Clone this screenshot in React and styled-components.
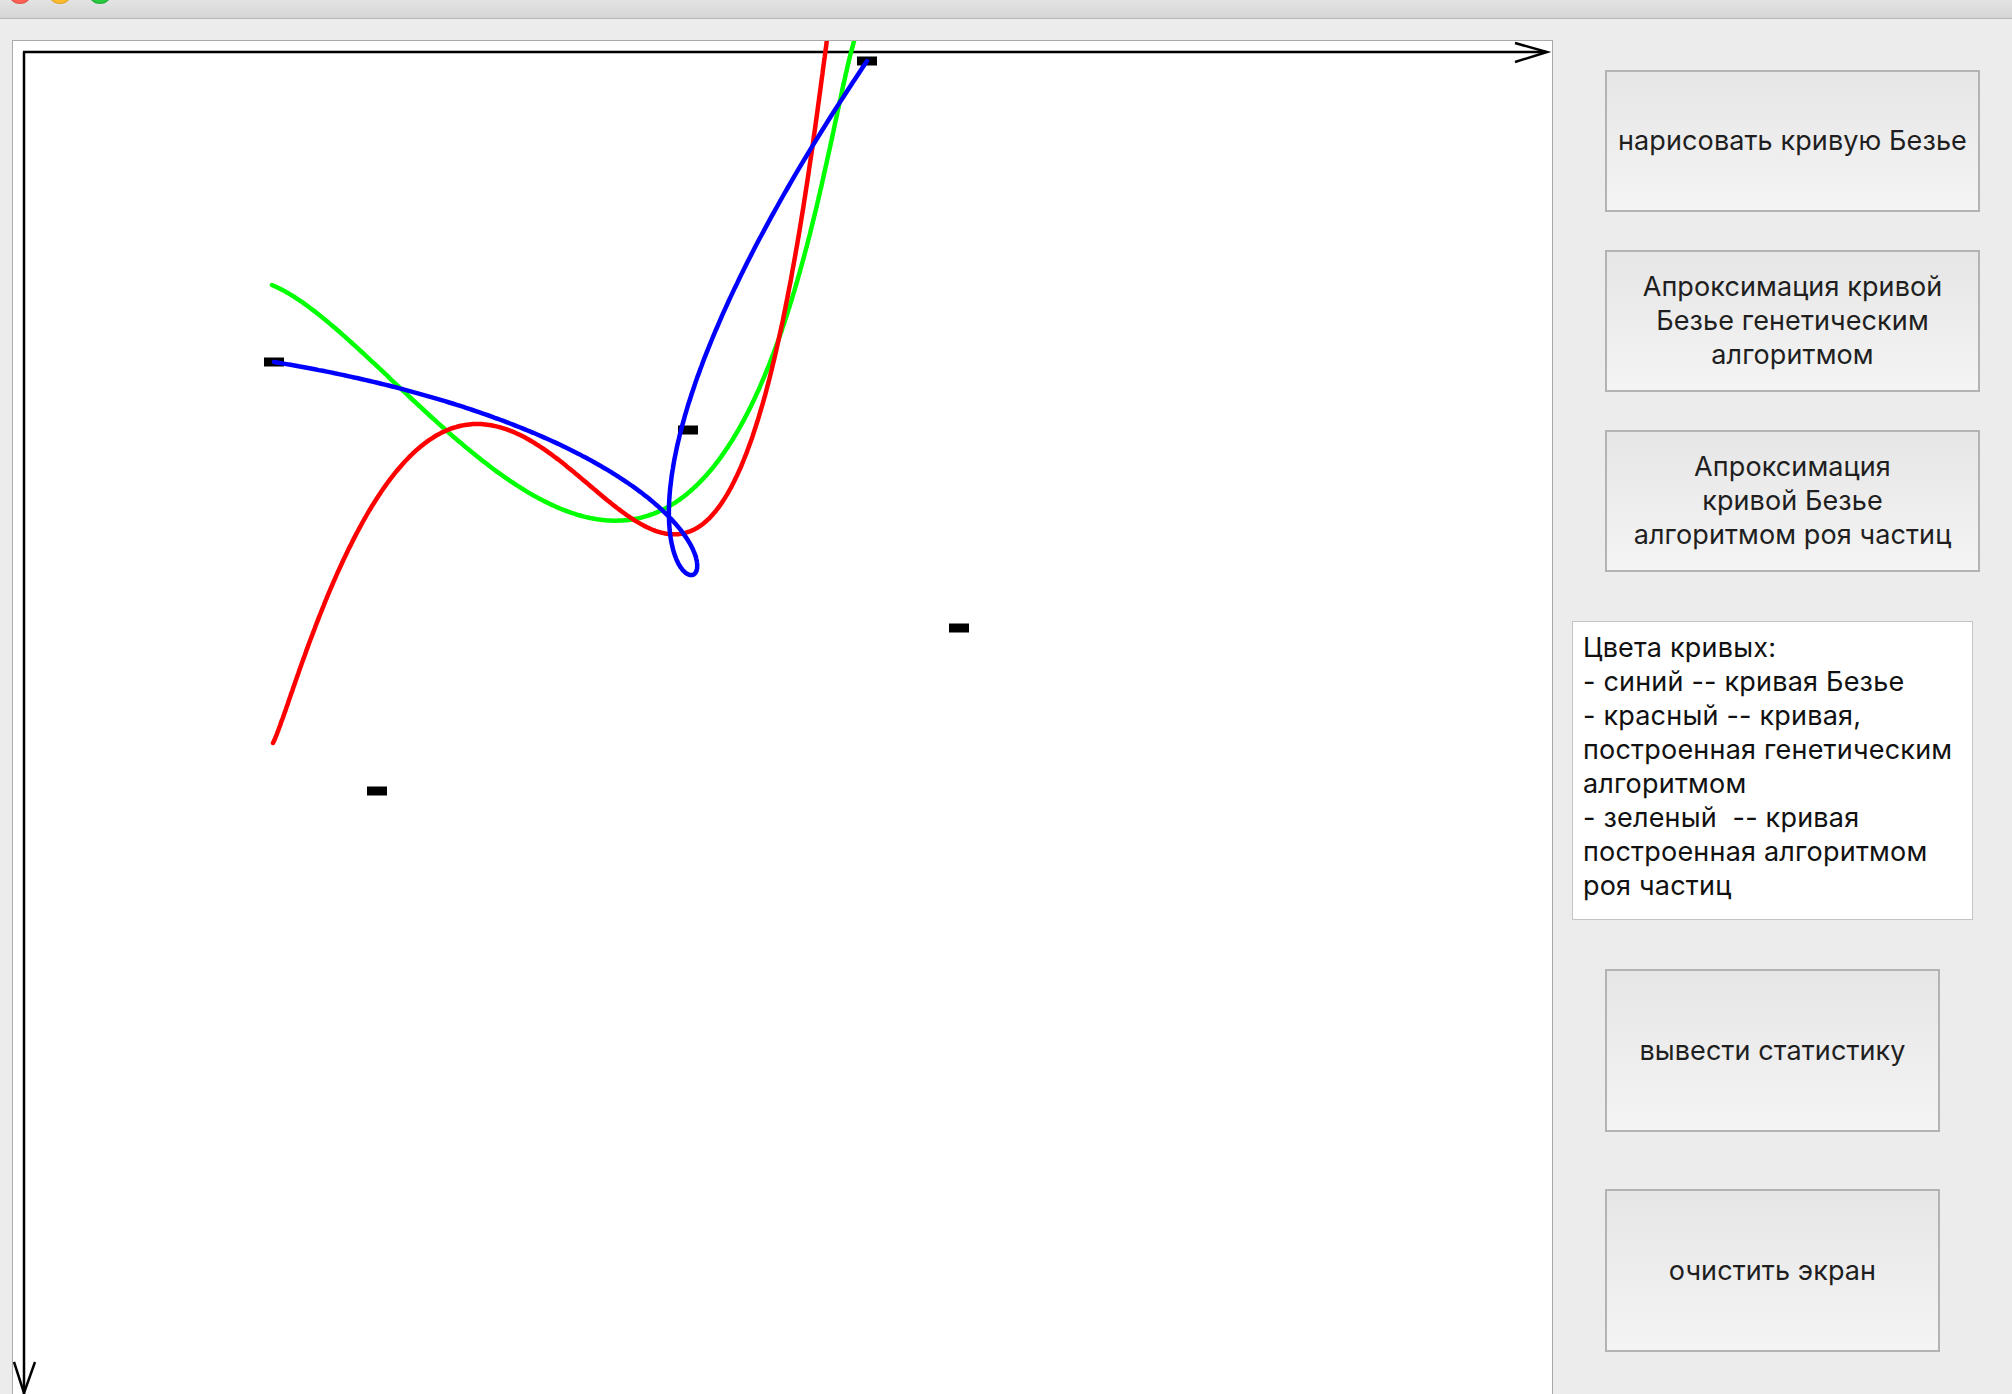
import React from "react";
import styled, { createGlobalStyle } from "styled-components";

const GlobalStyle = createGlobalStyle`
  html, body {
    margin: 0;
    padding: 0;
    background: #ececec;
  }
  body {
    font-family: Inter, "Liberation Sans", sans-serif;
  }
`;

// control points of the bezier curve (page coordinates)
const controlPoints = [
  [274, 362],
  [688, 430],
  [959, 628],
  [377, 791],
  [867, 61],
];

// points read off the two approximating curves
const genetic = [
  [273, 743], [290, 693], [308, 642], [326, 600], [353, 543], [380, 500],
  [407, 460], [440, 432], [476, 420], [506, 428], [544, 450], [583, 480],
  [621, 513], [652, 532], [671, 536], [697, 527], [717, 510], [736, 477],
  [755, 427], [772, 365], [787, 300], [798, 235], [808, 167], [819, 100],
  [828, 50], [833, 25],
];

const swarm = [
  [272, 285], [315, 313], [353, 343], [397, 387], [443, 427], [487, 463],
  [525, 490], [564, 510], [611, 522], [640, 518], [667, 507], [699, 485],
  [738, 432], [770, 363], [785, 310], [808, 231], [834, 141], [858, 41],
  [863, 20],
];

const binomials = (n) => {
  const row = [1];
  for (let k = 1; k <= n; k++) row.push((row[k - 1] * (n - k + 1)) / k);
  return row;
};

const bezierAt = (pts, t) => {
  const n = pts.length - 1;
  const c = binomials(n);
  let x = 0;
  let y = 0;
  for (let i = 0; i <= n; i++) {
    const b = c[i] * Math.pow(1 - t, n - i) * Math.pow(t, i);
    x += b * pts[i][0];
    y += b * pts[i][1];
  }
  return [x, y];
};

const bezierPath = (pts, steps = 400) => {
  const out = [];
  for (let s = 0; s <= steps; s++) {
    const [x, y] = bezierAt(pts, s / steps);
    out.push(`${x.toFixed(1)},${y.toFixed(1)}`);
  }
  return "M" + out.join(" L");
};

const solve = (A, b) => {
  const m = b.length;
  const M = A.map((row, i) => [...row, b[i]]);
  for (let c = 0; c < m; c++) {
    let p = c;
    for (let r = c + 1; r < m; r++) if (Math.abs(M[r][c]) > Math.abs(M[p][c])) p = r;
    [M[c], M[p]] = [M[p], M[c]];
    for (let r = 0; r < m; r++) {
      if (r === c) continue;
      const f = M[r][c] / M[c][c];
      for (let k = c; k <= m; k++) M[r][k] -= f * M[c][k];
    }
  }
  return M.map((row, i) => row[m] / row[i]);
};

// least squares bezier through sampled points, end points fixed
const fitBezier = (pts, n) => {
  const c = binomials(n);
  const first = pts[0];
  const last = pts[pts.length - 1];
  const len = [0];
  for (let i = 1; i < pts.length; i++) {
    len.push(len[i - 1] + Math.hypot(pts[i][0] - pts[i - 1][0], pts[i][1] - pts[i - 1][1]));
  }
  let ts = len.map((v) => v / len[len.length - 1]);
  let ctrl = null;
  for (let iter = 0; iter < 10; iter++) {
    const m = n - 1;
    const A = Array.from({ length: m }, () => Array(m).fill(0));
    const bx = Array(m).fill(0);
    const by = Array(m).fill(0);
    ts.forEach((t, k) => {
      const B = c.map((ci, i) => ci * Math.pow(1 - t, n - i) * Math.pow(t, i));
      const rx = pts[k][0] - B[0] * first[0] - B[n] * last[0];
      const ry = pts[k][1] - B[0] * first[1] - B[n] * last[1];
      for (let i = 0; i < m; i++) {
        bx[i] += B[i + 1] * rx;
        by[i] += B[i + 1] * ry;
        for (let j = 0; j < m; j++) A[i][j] += B[i + 1] * B[j + 1];
      }
    });
    const xs = solve(A, bx);
    const ys = solve(A, by);
    ctrl = [first, ...xs.map((x, i) => [x, ys[i]]), last];
    const samples = [];
    for (let s = 0; s <= 1000; s++) samples.push(bezierAt(ctrl, s / 1000));
    ts = pts.map((p, k) => {
      if (k === 0) return 0;
      if (k === pts.length - 1) return 1;
      let best = 0;
      let dist = Infinity;
      samples.forEach(([x, y], s) => {
        const d = (x - p[0]) ** 2 + (y - p[1]) ** 2;
        if (d < dist) {
          dist = d;
          best = s;
        }
      });
      return best / 1000;
    });
  }
  return ctrl;
};

const Window = styled.div`
  width: 2012px;
  height: 1394px;
  overflow: hidden;
  display: flex;
  flex-direction: column;
  background: #ececec;
`;

const TitleBar = styled.div`
  flex: none;
  height: 18px;
  display: flex;
  align-items: flex-start;
  gap: 16px;
  padding-left: 8px;
  overflow: hidden;
  background: linear-gradient(#e3e3e3, #d5d5d5);
  border-bottom: 1px solid #b6b6b6;
`;

const Light = styled.span`
  flex: none;
  width: 24px;
  height: 24px;
  margin-top: -20px;
  border-radius: 50%;
  background: ${(p) => p.$color};
  box-shadow: inset 0 0 0 1px rgba(0, 0, 0, 0.12);
`;

const Body = styled.div`
  flex: 1;
  min-height: 0;
  display: flex;
`;

const CanvasPanel = styled.div`
  flex: none;
  width: 1539px;
  margin: 21px 0 0 12px;
  background: #fff;
  border: 1px solid #a9a9a9;
  border-bottom: none;
  overflow: hidden;
`;

const Plot = styled.svg`
  display: block;
  width: 1539px;
  height: 1353px;
`;

const Side = styled.div`
  flex: 1;
  display: flex;
  flex-direction: column;
  align-items: flex-start;
  padding: 51px 0 0 19px;
`;

const ActionButton = styled.button`
  box-sizing: border-box;
  width: ${(p) => p.$w}px;
  height: ${(p) => p.$h}px;
  margin: ${(p) => p.$gap}px 0 0 33px;
  padding: 0 6px;
  border: 2px solid #b3b3b3;
  border-radius: 0;
  background: linear-gradient(#e6e6e6, #f4f4f4);
  color: #1f1f1f;
  font-family: Inter, "Liberation Sans", sans-serif;
  font-size: 27px;
  line-height: 34px;
  letter-spacing: 0.1px;
  text-align: center;
  white-space: nowrap;
`;

const Legend = styled.div`
  box-sizing: border-box;
  width: 401px;
  height: 299px;
  margin-top: 49px;
  padding: 9px 10px;
  background: #fff;
  border: 1px solid #c4c4c4;
  color: #111;
  font-size: 27px;
  line-height: 34px;
  letter-spacing: 0.2px;
  white-space: pre;
`;

const App = () => {
  const swarmCurve = fitBezier(swarm, 4);
  const geneticCurve = fitBezier(genetic, 5);

  return (
    <>
      <GlobalStyle />
      <Window>
        <TitleBar>
          <Light $color="#fe5f57" />
          <Light $color="#febc2e" />
          <Light $color="#28c840" />
        </TitleBar>
        <Body>
          <CanvasPanel>
            <Plot viewBox="13 41 1539 1353">
              <g stroke="#000" strokeWidth="2.5" fill="none">
                <line x1="23" y1="52" x2="1546" y2="52" />
                <line x1="24" y1="52" x2="24" y2="1394" />
                <polyline points="1515,43 1547,52 1515,62" />
                <polyline points="14,1362 24,1393 35,1362" />
              </g>
              {controlPoints.map(([x, y], i) => (
                <rect key={i} x={x - 10} y={y - 4.5} width="20" height="9" fill="#000" />
              ))}
              <g fill="none" strokeWidth="4.5" strokeLinecap="round" strokeLinejoin="round">
                <path d={bezierPath(swarmCurve)} stroke="#00ff00" />
                <path d={bezierPath(geneticCurve)} stroke="#ff0000" />
                <path d={bezierPath(controlPoints)} stroke="#0000ff" />
              </g>
            </Plot>
          </CanvasPanel>
          <Side>
            <ActionButton $w={375} $h={142} $gap={0}>
              нарисовать кривую Безье
            </ActionButton>
            <ActionButton $w={375} $h={142} $gap={38}>
              Апроксимация кривой
              <br />
              Безье генетическим
              <br />
              алгоритмом
            </ActionButton>
            <ActionButton $w={375} $h={142} $gap={38}>
              Апроксимация
              <br />
              кривой Безье
              <br />
              алгоритмом роя частиц
            </ActionButton>
            <Legend>
              {"Цвета кривых:\n- синий -- кривая Безье\n- красный -- кривая,\nпостроенная генетическим\nалгоритмом\n- зеленый  -- кривая\nпостроенная алгоритмом\nроя частиц"}
            </Legend>
            <ActionButton $w={335} $h={163} $gap={49}>
              вывести статистику
            </ActionButton>
            <ActionButton $w={335} $h={163} $gap={57}>
              очистить экран
            </ActionButton>
          </Side>
        </Body>
      </Window>
    </>
  );
};

export default App;
